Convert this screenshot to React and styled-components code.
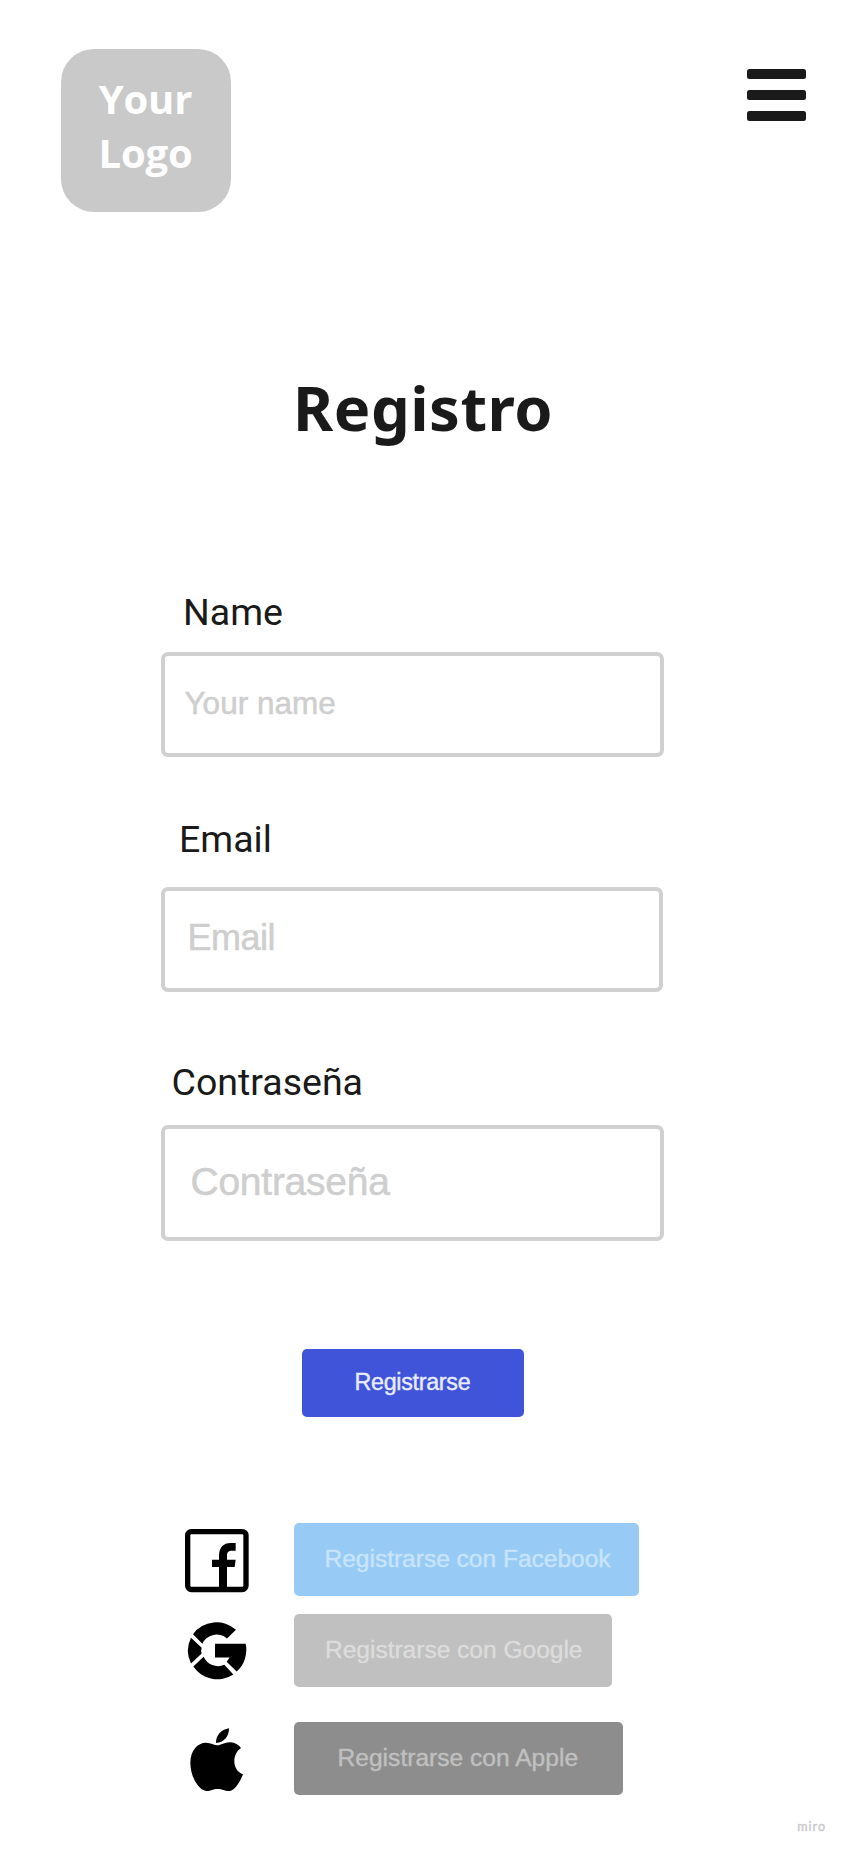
import React from "react";
import styled, { createGlobalStyle } from "styled-components";

const GlobalStyle = createGlobalStyle`
  *, *::before, *::after { box-sizing: border-box; }
  body { margin: 0; background: #fff; color: #1a1a1a; }
`;

const Page = styled.div`
  width: 844px;
  height: 1850px;
  display: flex;
  flex-direction: column;
  background: #fff;
  overflow: hidden;
`;

const Header = styled.header`
  display: flex;
  justify-content: space-between;
  align-items: flex-start;
  padding: 49px 38px 0 61px;
`;

const Logo = styled.div`
  width: 170px;
  height: 163px;
  padding: 23px 1px 0 0;
  border-radius: 33px;
  background: #c9c9c9;
  color: #fff;
  font: 700 40px/54px "Open Sans", sans-serif;
  letter-spacing: -0.2px;
  text-align: center;
`;

const MenuButton = styled.button`
  display: flex;
  flex-direction: column;
  gap: 11px;
  width: 59px;
  margin-top: 20px;
  padding: 0;
  border: 0;
  background: none;
`;

const MenuBar = styled.span`
  height: 10px;
  border-radius: 2.5px;
  background: #1a1a1a;
`;

const Title = styled.h1`
  margin: 155px 0 0 293px;
  font: 700 61.4px/80px "Noto Sans", sans-serif;
  letter-spacing: 0.5px;
  white-space: nowrap;
`;

const Form = styled.form`
  display: flex;
  flex-direction: column;
  align-items: flex-start;
  padding: 143px 0 0 161px;
`;

const Field = styled.label`
  display: flex;
  flex-direction: column;
  margin-bottom: ${(p) => p.$after}px;
`;

const FieldName = styled.span`
  margin: 0 0 ${(p) => p.$gap}px ${(p) => p.$indent}px;
  font: 400 37.5px/44px Roboto, sans-serif;
`;

const Input = styled.input`
  width: ${(p) => p.$width}px;
  height: ${(p) => p.$height}px;
  padding: 0 0 ${(p) => p.$lift || 0}px ${(p) => p.$inset}px;
  border: 4px solid #d0d0d0;
  border-radius: 7px;
  outline: 0;
  background: #fff;
  font: 400 ${(p) => p.$size}px "Liberation Sans", Arial, sans-serif;
  letter-spacing: ${(p) => p.$tracking || 0}px;
  &::placeholder {
    color: #cecece;
    opacity: 1;
    -webkit-text-stroke: 0.5px #cecece;
  }
`;

const Button = styled.button`
  width: ${(p) => p.$width}px;
  height: ${(p) => p.$height}px;
  padding: 0 0 2px ${(p) => p.$inset}px;
  border: 0;
  border-radius: 5px;
  background: ${(p) => p.$bg};
  color: ${(p) => p.$color};
  font: 400 ${(p) => p.$size || 24.6}px/28px "Liberation Sans", Arial, sans-serif;
  letter-spacing: ${(p) => p.$tracking || 0}px;
  -webkit-text-stroke: 0.4px ${(p) => p.$color};
  text-align: left;
  white-space: nowrap;
`;

const SubmitRow = styled.div`
  padding-left: 140.5px;
`;

const Providers = styled.section`
  display: flex;
  flex-direction: column;
  padding: 106px 0 0 180px;
`;

const Provider = styled.div`
  display: flex;
  align-items: center;
  height: 73px;
  margin-bottom: ${(p) => p.$after || 0}px;
`;

const IconSlot = styled.div`
  display: flex;
  width: 114px;
  svg { display: block; }
`;

const Footer = styled.footer`
  padding: 24px 18px 0 0;
  text-align: right;
  color: #c9c9d0;
  font: 400 12.5px/16px Lato, sans-serif;
  letter-spacing: 1px;
  -webkit-text-stroke: 0.4px #c9c9d0;
`;

const FacebookIcon = () => (
  <svg width="74" height="73" viewBox="30 39 222 219">
    <rect x="53" y="65" width="175" height="173.5" rx="11" fill="none" stroke="#000" strokeWidth="16" />
    <path d="M147 240V171H126V149H147V138C147 113 160 99 182 99H197V122H186C175 122 171 127 171 136V149H197L194 171H171V240Z" />
  </svg>
);

const GoogleIcon = () => (
  <svg width="74" height="73" viewBox="31 312.5 222 219">
    <path d="M70 373A87 87 0 0 1 199 360L172 386A47 47 0 0 0 98 402Z" />
    <path d="M64 384A87 87 0 0 0 64 461L96 431Q93 422 96 414Z" />
    <path d="M71 470A87 87 0 0 0 191 494L164 465A47 47 0 0 1 102 441Z" />
    <path d="M136 402H228A87 87 0 0 1 201 485L171 456L180 443H136Z" />
  </svg>
);

const AppleIcon = () => (
  <svg width="74" height="73" viewBox="30 636 222 219">
    <path d="M138 699C137 678 153 658 177 655C178 678 161 699 138 699Z" />
    <path d="M142 706C153 706 165 696 181 697C195 698 206 704 213 714C200 723 193 737 193 754C193 773 203 787 219 793C211 813 196 841 179 843C166 844 159 837 143 837C127 837 121 844 109 843C87 841 61 801 61 759C61 721 83 698 108 698C122 698 133 706 142 706Z" />
  </svg>
);

export default function App() {
  return (
    <>
      <GlobalStyle />
      <Page>
        <Header>
          <Logo>Your<br />Logo</Logo>
          <MenuButton aria-label="Menu">
            <MenuBar /><MenuBar /><MenuBar />
          </MenuButton>
        </Header>
        <Title>Registro</Title>
        <Form>
          <Field $after={60.5}>
            <FieldName $indent={22} $gap={18}>Name</FieldName>
            <Input $width={503} $height={104.5} $inset={19.5} $size={31.5} $lift={2} placeholder="Your name" />
          </Field>
          <Field $after={68}>
            <FieldName $indent={18} $gap={26}>Email</FieldName>
            <Input $width={502} $height={105} $inset={22.5} $size={36} $tracking={-0.5} $lift={3} placeholder="Email" />
          </Field>
          <Field $after={108}>
            <FieldName $indent={10.5} $gap={21}>Contraseña</FieldName>
            <Input $width={502.5} $height={116} $inset={25.5} $size={39} $tracking={-0.25} $lift={2} placeholder="Contraseña" />
          </Field>
          <SubmitRow>
            <Button type="button" $width={222} $height={68} $inset={53} $size={23.3} $tracking={-0.3} $bg="#3f54d9" $color="#e9ecff">Registrarse</Button>
          </SubmitRow>
        </Form>
        <Providers>
          <Provider $after={18}>
            <IconSlot><FacebookIcon /></IconSlot>
            <Button $width={345} $height={73} $inset={30.5} $tracking={-0.04} $bg="#97cbf6" $color="#c8e4fc">Registrarse con Facebook</Button>
          </Provider>
          <Provider $after={35}>
            <IconSlot><GoogleIcon /></IconSlot>
            <Button $width={318} $height={73} $inset={31} $tracking={-0.04} $bg="#c0c0c0" $color="#dcdcdc">Registrarse con Google</Button>
          </Provider>
          <Provider>
            <IconSlot><AppleIcon /></IconSlot>
            <Button $width={328.5} $height={73} $inset={43.5} $bg="#8d8d8d" $color="#c0c0c0">Registrarse con Apple</Button>
          </Provider>
        </Providers>
        <Footer>miro</Footer>
      </Page>
    </>
  );
}
